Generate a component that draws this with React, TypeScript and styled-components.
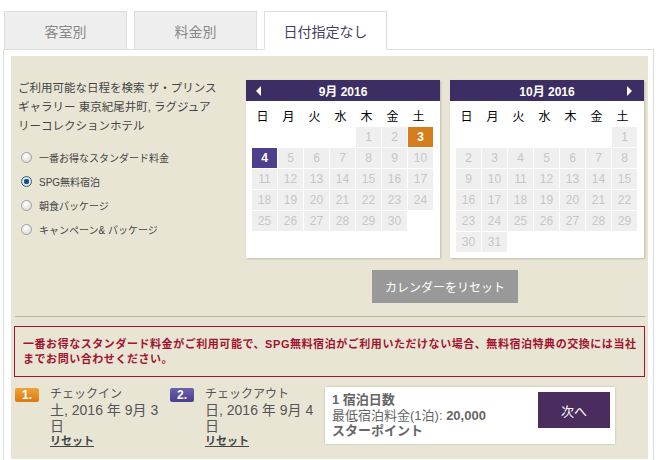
import React from 'react'
import styled, { createGlobalStyle } from 'styled-components'

const GlobalStyle = createGlobalStyle`
  body {
    margin: 0;
    background: #fff;
    font-family: "Liberation Sans", "Noto Sans CJK JP", sans-serif;
  }
`

const weekdays = ['日', '月', '火', '水', '木', '金', '土']

type Mark = 'in' | 'out' | undefined

const Calendar = ({ title, blanks, days, prev, next, marks }: {
  title: string
  blanks: number
  days: number
  prev?: boolean
  next?: boolean
  marks?: Record<number, Mark>
}) => {
  const cells: (number | null)[] = []
  for (let i = 0; i < blanks; i++) cells.push(null)
  for (let d = 1; d <= days; d++) cells.push(d)
  return (
    <CalBox>
      <CalHead>
        <span>{prev && <ArrowLeft />}</span>
        <CalTitle>{title}</CalTitle>
        <span>{next && <ArrowRight />}</span>
      </CalHead>
      <WeekRow>
        {weekdays.map(w => <WeekDay key={w}>{w}</WeekDay>)}
      </WeekRow>
      <DayGrid>
        {cells.map((d, i) =>
          d === null
            ? <Blank key={i} />
            : <Day key={i} $mark={marks?.[d]}>{d}</Day>
        )}
      </DayGrid>
    </CalBox>
  )
}

const options = ['一番お得なスタンダード料金', 'SPG無料宿泊', '朝食パッケージ', 'キャンペーン& パッケージ']

const App = () => {
  return (
    <Page>
      <GlobalStyle />
      <Tabs>
        <Tab>客室別</Tab>
        <Tab>料金別</Tab>
        <Tab $active>日付指定なし</Tab>
      </Tabs>
      <Panel>
        <Content>
          <Top>
            <LeftCol>
              <Intro>
                ご利用可能な日程を検索 ザ・プリンス<br />
                ギャラリー 東京紀尾井町, ラグジュア<br />
                リーコレクションホテル
              </Intro>
              <RadioList>
                {options.map((o, i) => (
                  <RadioRow key={o}>
                    <Radio $checked={i === 1} />
                    <span>{o}</span>
                  </RadioRow>
                ))}
              </RadioList>
            </LeftCol>
            <RightCol>
              <Calendars>
                <Calendar title="9月 2016" blanks={4} days={30} prev marks={{ 3: 'in', 4: 'out' }} />
                <Calendar title="10月 2016" blanks={6} days={31} next />
              </Calendars>
              <ResetButton>カレンダーをリセット</ResetButton>
            </RightCol>
          </Top>
          <Divider />
          <Notice>
            一番お得なスタンダード料金がご利用可能で、SPG無料宿泊がご利用いただけない場合、無料宿泊特典の交換には当社<br />
            までお問い合わせください。
          </Notice>
          <Bottom>
            <Step>
              <Badge $color="orange">1.</Badge>
              <StepText>
                <StepLabel>チェックイン</StepLabel>
                <StepDate>土, 2016 年 9月 3</StepDate>
                <StepDate>日</StepDate>
                <ResetLink>リセット</ResetLink>
              </StepText>
            </Step>
            <Step>
              <Badge $color="purple">2.</Badge>
              <StepText>
                <StepLabel>チェックアウト</StepLabel>
                <StepDate>日, 2016 年 9月 4</StepDate>
                <StepDate>日</StepDate>
                <ResetLink>リセット</ResetLink>
              </StepText>
            </Step>
            <Summary>
              <SummaryText>
                <strong>1 宿泊日数</strong>
                <span>最低宿泊料金(1泊): <strong>20,000</strong></span>
                <strong>スターポイント</strong>
              </SummaryText>
              <NextButton>次へ</NextButton>
            </Summary>
          </Bottom>
        </Content>
      </Panel>
    </Page>
  )
}

export default App

const Page = styled.div`
  padding: 11px 0 0 3px;
`
const Tabs = styled.div`
  display: flex;
  align-items: flex-end;
  gap: 7px;
  padding-left: 1px;
  margin-bottom: -1px;
  position: relative;
  z-index: 1;
`
const Tab = styled.div<{ $active?: boolean }>`
  width: 123px;
  height: 39px;
  box-sizing: border-box;
  border: 1px solid #ddd;
  border-bottom: 1px solid ${p => (p.$active ? '#fff' : '#ddd')};
  background: ${p => (p.$active ? '#fff' : '#eee')};
  color: ${p => (p.$active ? '#4a3d60' : '#888')};
  font-size: 14px;
  display: flex;
  align-items: center;
  justify-content: center;
`
const Panel = styled.div`
  width: 651px;
  box-sizing: border-box;
  border: 1px solid #ddd;
  padding: 6px 5px 5px 7px;
`
const Content = styled.div`
  background: #e8e5d4;
  padding: 24px 3px 11px 3px;
`
const Top = styled.div`
  display: flex;
`
const LeftCol = styled.div`
  width: 232px;
  padding-left: 4px;
  box-sizing: border-box;
`
const Intro = styled.div`
  font-size: 11.5px;
  line-height: 19px;
  color: #444;
  white-space: nowrap;
  margin-top: -1px;
`
const RadioList = styled.div`
  display: flex;
  flex-direction: column;
  gap: 6px;
  margin-top: 12px;
`
const RadioRow = styled.div`
  display: flex;
  align-items: center;
  height: 18px;
  font-size: 10px;
  color: #444;
  padding-left: 3px;
  gap: 7px;
`
const Radio = styled.span<{ $checked?: boolean }>`
  width: 11px;
  height: 11px;
  box-sizing: border-box;
  border-radius: 50%;
  border: 1px solid ${p => (p.$checked ? '#3c5f86' : '#a0a0a0')};
  background: ${p =>
    p.$checked
      ? 'radial-gradient(circle, #0b3c6e 0, #1f5d96 2.5px, #dfe8f0 3px, #c8d4de 100%)'
      : 'radial-gradient(circle at 40% 35%, #fff 0, #e6e6e6 60%, #cfcfcf 100%)'};
`
const RightCol = styled.div`
  display: flex;
  flex-direction: column;
  align-items: center;
`
const Calendars = styled.div`
  display: flex;
  gap: 10px;
`
const CalBox = styled.div`
  width: 194px;
  height: 178px;
  box-sizing: border-box;
  background: #fff;
  box-shadow: 1px 1px 2px rgba(0, 0, 0, 0.18);
  padding: 0 7px 0 6px;
`
const CalHead = styled.div`
  display: grid;
  grid-template-columns: 20px 1fr 20px;
  align-items: center;
  height: 21px;
  margin: 0 -7px 0 -6px;
  padding: 0 4px;
  background: #3c2e62;
  color: #fff;
`
const CalTitle = styled.div`
  text-align: center;
  font-weight: bold;
  font-size: 12px;
`
const ArrowLeft = styled.span`
  display: block;
  width: 0;
  height: 0;
  margin-left: 6px;
  border-top: 5px solid transparent;
  border-bottom: 5px solid transparent;
  border-right: 5px solid #fff;
`
const ArrowRight = styled.span`
  display: block;
  width: 0;
  height: 0;
  margin-left: 7px;
  border-top: 5px solid transparent;
  border-bottom: 5px solid transparent;
  border-left: 5px solid #fff;
`
const WeekRow = styled.div`
  display: grid;
  grid-template-columns: repeat(7, 25px);
  column-gap: 1px;
  margin-top: 6px;
  height: 20px;
`
const WeekDay = styled.div`
  text-align: center;
  font-size: 12px;
  line-height: 20px;
  color: #000;
  padding-right: 4px;
`
const DayGrid = styled.div`
  display: grid;
  grid-template-columns: repeat(7, 25px);
  grid-auto-rows: 20px;
  gap: 1px;
`
const Blank = styled.div``
const Day = styled.div<{ $mark?: Mark }>`
  background: ${p => (p.$mark === 'in' ? '#d57d1c' : p.$mark === 'out' ? '#4d3f8c' : '#efefef')};
  color: ${p => (p.$mark ? '#fff' : '#c6c6c6')};
  font-weight: ${p => (p.$mark ? 'bold' : 'normal')};
  font-size: 12px;
  line-height: 20px;
  text-align: center;
`
const ResetButton = styled.div`
  margin-top: 12px;
  width: 146px;
  height: 33px;
  background: #999;
  color: #fff;
  font-size: 12px;
  display: flex;
  align-items: center;
  justify-content: center;
`
const Divider = styled.div`
  height: 1px;
  background: #b8b5a2;
  margin: 13px 0 0 1px;
`
const Notice = styled.div`
  margin-top: 9px;
  border: 1px solid #a3132f;
  padding: 10px 8px 9px;
  color: #a3132f;
  font-size: 11px;
  font-weight: bold;
  line-height: 15px;
  letter-spacing: 0.55px;
  white-space: nowrap;
`
const Bottom = styled.div`
  display: flex;
  align-items: flex-start;
  margin-top: 10px;
  padding-left: 1px;
`
const Step = styled.div`
  width: 155px;
  display: flex;
  align-items: flex-start;
  gap: 11px;
`
const Badge = styled.div<{ $color: 'orange' | 'purple' }>`
  width: 24px;
  height: 14px;
  margin-top: 1px;
  flex: none;
  border-radius: 2px;
  background: ${p =>
    p.$color === 'orange'
      ? 'linear-gradient(#f1a33a, #d97a12)'
      : 'linear-gradient(#6b62ad, #4a3f8c)'};
  color: #fff;
  font-weight: bold;
  font-size: 12px;
  line-height: 14px;
  text-align: center;
`
const StepText = styled.div`
  display: flex;
  flex-direction: column;
  color: #555;
`
const StepLabel = styled.div`
  font-size: 12px;
  line-height: 15px;
`
const StepDate = styled.div`
  font-size: 14px;
  line-height: 16px;
  white-space: nowrap;
`
const ResetLink = styled.a`
  font-size: 11px;
  font-weight: bold;
  color: #444;
  text-decoration: underline;
  line-height: 14px;
`
const Summary = styled.div`
  width: 290px;
  height: 57px;
  box-sizing: border-box;
  background: #fff;
  box-shadow: 0 0 2px rgba(0, 0, 0, 0.2);
  padding: 5px 5px 5px 7px;
  display: flex;
  justify-content: space-between;
  align-items: flex-start;
`
const SummaryText = styled.div`
  display: flex;
  flex-direction: column;
  font-size: 13px;
  line-height: 15.5px;
  color: #666;
  strong {
    color: #666;
  }
`
const NextButton = styled.div`
  width: 72px;
  height: 36px;
  background: #4b2c5e;
  color: #fff;
  font-size: 13px;
  display: flex;
  align-items: center;
  justify-content: center;
`
